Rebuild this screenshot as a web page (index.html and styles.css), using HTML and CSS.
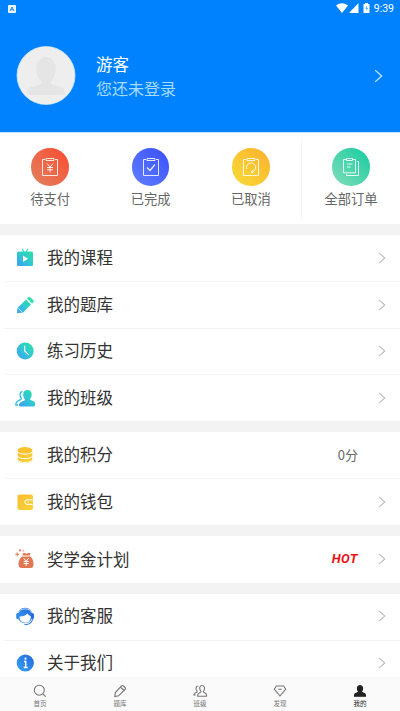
FILE: index.html
```html
<!DOCTYPE html>
<html lang="zh-CN">
<head>
<meta charset="utf-8">
<title>我的</title>
<link rel="stylesheet" href="styles.css">
</head>
<body>
<svg class="defs" width="0" height="0" aria-hidden="true">
  <defs>
    <linearGradient id="aqua" x1="1" y1="0" x2="0" y2="1"><stop offset="0" stop-color="#2be2a0"/><stop offset=".5" stop-color="#30c8d3"/><stop offset="1" stop-color="#3b9df5"/></linearGradient>
    <linearGradient id="gold" x1="0" y1="0" x2="1" y2="1"><stop offset="0" stop-color="#f9bd32"/><stop offset="1" stop-color="#fbd236"/></linearGradient>
    <linearGradient id="blue" x1="1" y1="0" x2="0" y2="1"><stop offset="0" stop-color="#2464dc"/><stop offset="1" stop-color="#35a5f7"/></linearGradient>
    <symbol id="next" viewBox="0 0 8 12"><path d="M1 .8 6.8 6 1 11.2" fill="none" stroke="currentColor" stroke-width="1.1"/></symbol>
  </defs>
</svg>
<div class="app">
  <header class="header">
    <div class="status">
      <svg class="status-app" width="8" height="8" viewBox="0 0 8 8"><rect width="8" height="8" rx="1" fill="#e9f8ff"/><path d="M2 6 4 2l2 4M3 4.8h2" fill="none" stroke="#2588dc" stroke-width="1"/></svg>
      <svg width="34" height="11" viewBox="0 0 34 11" fill="#fff"><path d="M0 2.500Q6-1.8 12 2.500L6 10zM22.500 0v10H13zM27.500 1h1.500V0h3v1h1.500v9h-6z"/><path d="M31 2.500 29.300 5.500h1.500L30 8l2-3h-1.400z" fill="#0883e9"/></svg>
      <span class="clock">9:39</span>
    </div>
    <div class="profile">
      <svg class="avatar" width="60" height="60" viewBox="0 0 60 60"><circle cx="30" cy="29.500" r="29" fill="#eee" stroke="#d7efff" stroke-width=".7"/><path d="M30 11c6 0 10 5 10 12 0 5-2 9-5 12-1 3 2 4 6 5 6 1 8 3 8 7 0 2-1 2-3 2H13c-2 0-2-1-2-3 0-4 4-5 9-6 4-1 6-2 5-5-3-3-5-7-5-12 0-7 4-12 10-12z" fill="#e5e5e5"/></svg>
      <div class="who"><div class="name">游客</div><div class="login">您还未登录</div></div>
      <svg class="header-arrow" width="9" height="14"><use href="#next"/></svg>
    </div>
  </header>
  <section class="orders">
    <div class="order"><span class="disc red"><svg width="18" height="20" viewBox="0 0 18 20"><path d="M4 2.500H1.500v16h15v-16H14M5 1.500h8v2H5zM6 6.500l3 3.500 3-3.500M9 10v5.500M6 10.500h6M6 12.800h6"/></svg></span>待支付</div>
    <div class="order"><span class="disc indigo"><svg width="18" height="20" viewBox="0 0 18 20"><path d="M4 2.500H1.500v16h15v-16H14M5 1.500h8v2H5z"/><path d="m5 10.500 3 3 5-6" stroke-width="1.300"/></svg></span>已完成</div>
    <div class="order"><span class="disc yellow"><svg width="18" height="20" viewBox="0 0 18 20"><path d="M4 2.500H1.500v16h15v-16H14M5 1.500h8v2H5zM4.800 12A4.600 4.600 0 1 1 10 15M11.500 13l-2.500 2 2.500 1"/></svg></span>已取消</div>
    <div class="order all"><span class="disc green"><svg width="18" height="20" viewBox="0 0 18 20"><path d="M4 2.500H1.500v13.300h12V2.500H11M4.500 1.500h6v2h-6zM15 4.500h1.500v14h-12V17M5 7h5.500M5 10h3.500"/></svg></span>全部订单</div>
  </section>
  <section class="group four">
    <div class="row"><svg class="icon" viewBox="0 0 20 20"><path d="M7 .8 9 4M13 .8 11 4" stroke="#32dabb" stroke-width="1.100"/><path d="M3.500 3.500h13a1.500 1.500 0 0 1 1.500 1.500v11.500a1.500 1.500 0 0 1-1.500 1.500h-13A1.500 1.500 0 0 1 2 16.500V5a1.500 1.500 0 0 1 1.500-1.500z" fill="url(#aqua)"/><path d="m8 7.500 5 3.300L8 14z" fill="#fff"/></svg><span class="label">我的课程</span><svg class="arrow"><use href="#next"/></svg></div>
    <div class="row"><svg class="icon" viewBox="0 0 20 20"><path d="m11 4.500 5 5L8 17.500 2 18.300 2.500 13z" fill="url(#aqua)"/><path d="m12 3.600 1.300-1.300q1-.8 2 0l3 3q.8 1 0 2L17 8.600z" fill="#30dfaa"/><path d="m3.500 13.500 3.500 3.300" stroke="#fff" stroke-width=".8"/></svg><span class="label">我的题库</span><svg class="arrow"><use href="#next"/></svg></div>
    <div class="row"><svg class="icon" viewBox="0 0 20 20"><circle cx="10.200" cy="10" r="8.500" fill="url(#aqua)"/><path d="M9.700 4.800V10l4 3.800" fill="none" stroke="#fff" stroke-width="1.100"/></svg><span class="label">练习历史</span><svg class="arrow"><use href="#next"/></svg></div>
    <div class="row"><svg class="icon" viewBox="0 0 20 20"><path d="M12.500 2c3 0 4.500 2 4.200 5-.2 2-1 3-1.700 4-.5 1.500 5 1.500 5 4v2.500q0 1-1 1H5q-1 0-1-1C4 13 10 13.500 10 11.500 8.500 10 8 8 8.200 6 8.400 3.500 10 2 12.500 2z" fill="url(#aqua)"/><path d="M7.500 3.700C4.500 3.200 4.500 8 6.300 10.500 6.800 12.500.5 12 .8 17H3" fill="none" stroke="#31bfe0" stroke-width="1.300"/></svg><span class="label">我的班级</span><svg class="arrow"><use href="#next"/></svg></div>
  </section>
  <section class="group two">
    <div class="row"><svg class="icon" viewBox="0 0 20 20"><path d="M2.700 5v10c0 4.200 14.600 4.200 14.600 0V5z" fill="url(#gold)"/><ellipse cx="10" cy="5" rx="7.300" ry="3" fill="#f9c231"/><path d="M2.500 6.500c1 3.500 14 3.500 15 0M2.500 11c1 3.500 14 3.500 15 0M2.500 14.800c1 3.500 14 3.500 15 0" fill="none" stroke="#fff" stroke-width="1"/></svg><span class="label">我的积分</span><span class="points">0分</span></div>
    <div class="row"><svg class="icon" viewBox="0 0 20 20"><rect x="2.500" y="2.500" width="15.500" height="15.500" rx="2" fill="url(#gold)"/><path d="M18 7.800h-6a2 2 0 0 0 0 4.500h6M12.300 10h1.500" fill="none" stroke="#fff" stroke-width="1"/></svg><span class="label">我的钱包</span><svg class="arrow"><use href="#next"/></svg></div>
  </section>
  <section class="group one">
    <div class="row"><svg class="icon" viewBox="0 0 20 20"><path d="M7.500 4.500c2-1.200 3-.3 4 .3 1-.8 2.500-1 4-.2l-1.200 2.200c3 2 4.200 4.500 4.200 8.200 0 3-1 4-3.500 4H7c-2.700 0-3.500-1.200-3.500-4 0-3.500 1.500-6.200 4.500-8z" fill="#e17752"/><path d="m8.700 9.300 2.500 2.900 2.500-2.900M11.200 12v5M8.700 12.500h5M8.700 14.500h5M8 7h6.500" stroke="#fff" fill="none"/><path d="M.2 5.300h4M2.200 3.300v4M3.800 1.300h2.400M5 .1v2.400M7.800 1.800h1.500" stroke="#e17752"/></svg><span class="label">奖学金计划</span><span class="hot">HOT</span><svg class="arrow"><use href="#next"/></svg></div>
  </section>
  <section class="group last">
    <div class="row"><svg class="icon" viewBox="0 0 20 20"><circle cx="10" cy="9.500" r="7.700" fill="url(#blue)"/><rect x="1.200" y="7" width="3" height="6" rx="1.500" fill="#3188e8"/><rect x="16" y="7" width="3" height="6" rx="1.500" fill="#286ee0"/><path d="M4.500 10.500q5 .2 8-3 1.200 2.300 3.300 2.700c0 4-2 6.500-5.500 6.500s-5.800-2.200-5.800-6.200z" fill="#fff"/><path d="M3.300 7C5 1.500 15 1.500 17 7" fill="none" stroke="#dcefff" stroke-width=".8"/><path d="M17.700 13q-1 4.500-6 5.500H9.500" fill="none" stroke="#2d7ee3" stroke-width="1.100"/></svg><span class="label">我的客服</span><svg class="arrow"><use href="#next"/></svg></div>
    <div class="row"><svg class="icon" viewBox="0 0 20 20"><circle cx="10.300" cy="10" r="8.600" fill="url(#blue)"/><circle cx="10.500" cy="5.700" r="1.100" fill="#fff"/><path d="M9 8.500h1.700v6M8.700 14.500h4" fill="none" stroke="#fff" stroke-width="1.500"/></svg><span class="label">关于我们</span><svg class="arrow"><use href="#next"/></svg></div>
  </section>
  <nav class="tabs">
    <div class="tab"><svg viewBox="0 0 14 14"><circle cx="6.300" cy="6.200" r="5"/><path d="m10 10 2.700 2.700"/></svg>首页</div>
    <div class="tab"><svg viewBox="0 0 14 14"><path d="M8.500 2q1-1 2 0L12 3.500q1 1 0 2l-6.500 6.300-3.700.7.500-3.900zM7.500 3l3.500 3.500"/></svg>题库</div>
    <div class="tab"><svg viewBox="0 0 14 14"><path d="M9 1.500c3 0 3.300 3.500 1.300 6 0 1.500 3.200 1 3.200 3.500v1.200H4.700V11c0-2.500 3.300-2 3.300-3.500-2-2.500-1.700-6 1-6zM5.300 2C2.500 2 2.500 5 4.200 7.500 4.200 9 .8 8 .8 11h2"/></svg>班级</div>
    <div class="tab"><svg viewBox="0 0 14 14"><path d="M3.300 2h7.400l2 3.200L7 12 1.300 5.200zM5.200 5.200h3.600"/></svg>发现</div>
    <div class="tab active"><svg viewBox="0 0 14 14"><path d="M7 1.500c3 0 3.300 3.500 1.500 6 0 2 4 1 4 3.500v1.200h-11V11c0-2.500 4-1.500 4-3.500C3.700 5 4 1.500 7 1.500z"/></svg>我的</div>
  </nav>
</div>
</body>
</html>
```
FILE: styles.css
```css
* { box-sizing: border-box; }
body { margin: 0; background: #f3f3f3; color: #333; font-family: Roboto, "Noto Sans CJK SC", sans-serif; }
svg { display: block; flex: none; }
.defs { position: absolute; }
.app { height: 711px; display: flex; flex-direction: column; overflow: hidden; }
.header { height: 132px; flex: none; background: #0082ff; color: #fff; }
.status { height: 17px; display: flex; align-items: center; padding: 0 6px 0 8px; }
.status-app { margin-right: auto; }
.clock { margin-left: 4px; font-size: 10.5px; font-weight: 400; line-height: 17px; }
.profile { display: flex; align-items: center; padding: 29px 17px 0 16px; }
.who { flex: 1; margin-left: 20px; font-family: "Noto Sans CJK SC", sans-serif; }
.name { font-size: 16.5px; line-height: 24px; }
.login { font-size: 16px; line-height: 24px; color: #a6dcff; }
.header-arrow { color: #c5eaff; }
.orders { height: 92px; flex: none; display: flex; background: #fff; border-top: 1px solid #b9e6ff; }
.order { width: 100.4px; display: flex; flex-direction: column; align-items: center; padding-top: 15px; font: 13.3px/20px "Noto Sans CJK SC", sans-serif; color: #666; }
.order.all { flex: 1; margin: 5px 0; padding-top: 10px; border-left: 1px solid #f5f5f5; }
.disc { width: 37.5px; height: 37.5px; margin-bottom: 3.5px; border-radius: 50%; display: grid; place-items: center; }
.disc svg { fill: none; stroke: #fff; stroke-opacity: .85; stroke-width: 1; }
.red { background: linear-gradient(45deg, #e08260, #fb4b30); }
.indigo { background: linear-gradient(45deg, #6180ff, #394eff); }
.yellow { background: linear-gradient(45deg, #f7dc38, #fbb02d); }
.green { background: linear-gradient(45deg, #80deb9, #16cba0); }
.group { flex: none; margin-top: 11px; background: #fff; display: flex; flex-direction: column; }
.four { height: 186px; }
.two { height: 93px; }
.one { height: 47px; }
.last { height: 83px; }
.last .row { flex: none; height: 46px; padding-bottom: 2px; }
.row { flex: 1; display: flex; align-items: center; margin-left: 4px; padding: 0 14px 0 11px; }
.row + .row { border-top: 1px solid #f4f4f4; }
.icon { width: 20px; height: 20px; }
.label { flex: 1; margin: 0 0 2px 12px; font: 16.5px/24px "Noto Sans CJK SC", sans-serif; }
.arrow { width: 8px; height: 12px; color: #bbb; }
.points { margin-right: 28px; font: 13px/20px "Noto Sans CJK SC", sans-serif; color: #666; }
.hot { margin: 0 20px 2px 0; color: #e61414; font: italic 700 13px/20px Roboto, sans-serif; letter-spacing: .4px; }
.one .icon, .one .arrow { margin-bottom: 1px; }
.tabs { height: 34px; flex: none; display: flex; background: #fafafa; border-top: 1px solid #f6f6f6; }
.tab { flex: 1; display: flex; flex-direction: column; align-items: center; padding-top: 6px; font: 6.5px/10px "Noto Sans CJK SC", sans-serif; color: #777; }
.tab svg { width: 14px; height: 14px; fill: none; stroke: #777; stroke-width: 1.1; }
.tab.active { color: #222; }
.tab.active svg { fill: #222; stroke: #222; }
```
